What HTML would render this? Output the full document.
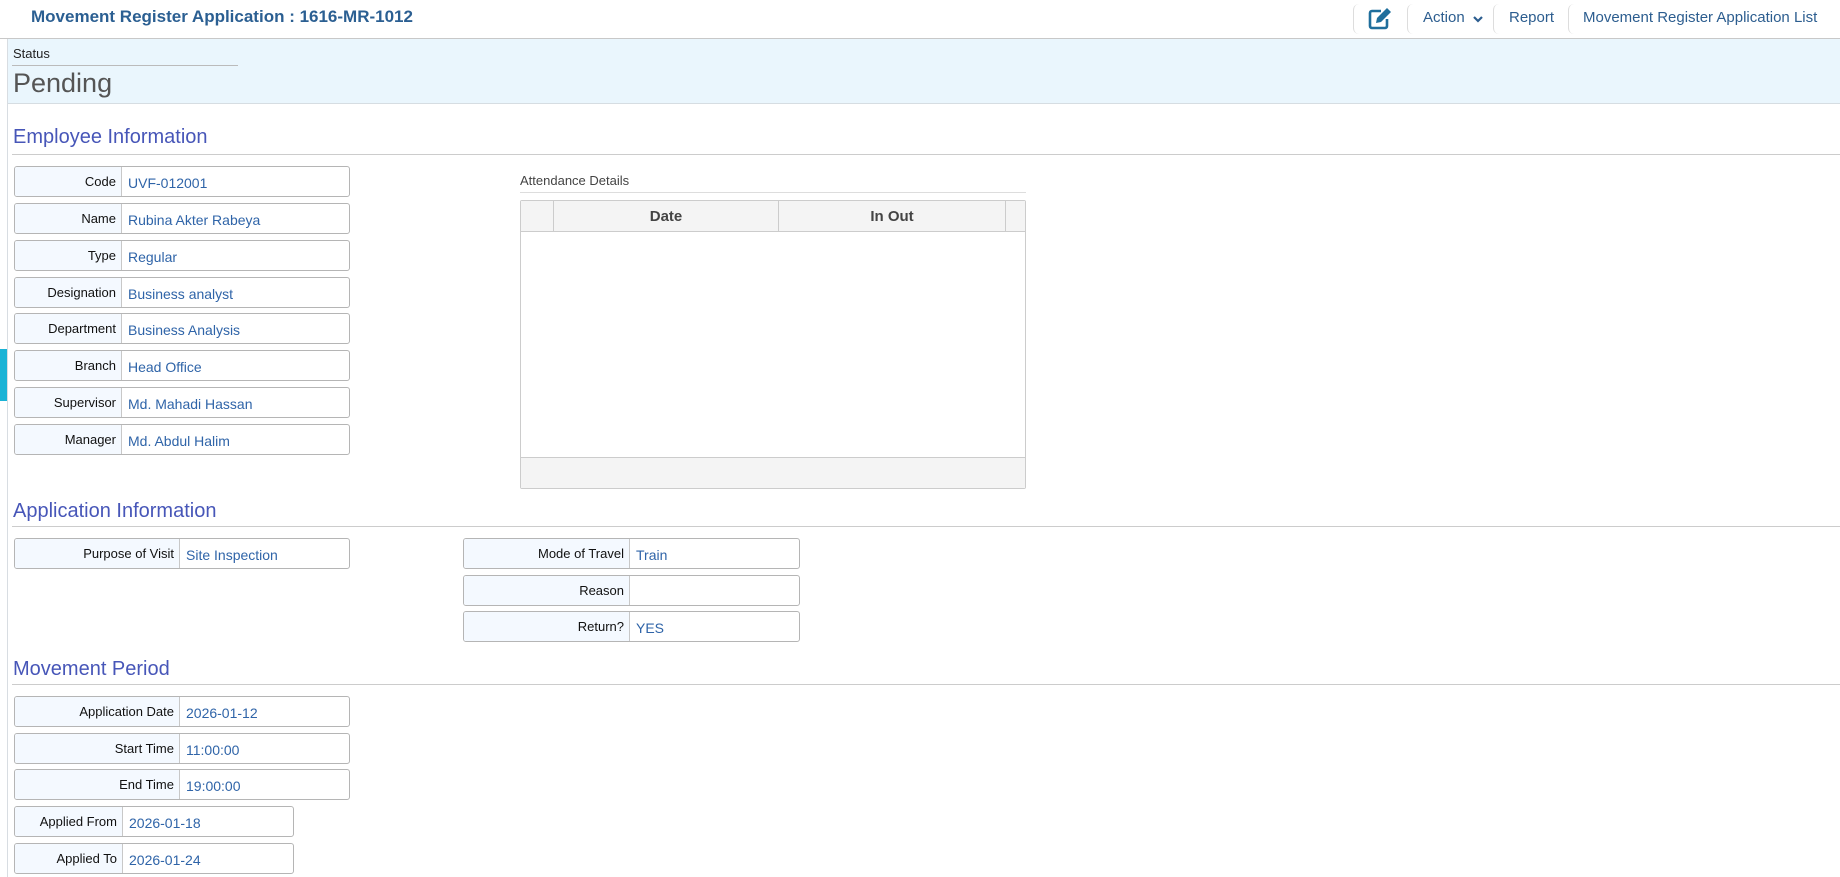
<!DOCTYPE html>
<html><head><meta charset="utf-8"><style>
*{box-sizing:border-box;margin:0;padding:0}
body{width:1840px;height:877px;overflow:hidden;background:#fff;font-family:"Liberation Sans",sans-serif;position:relative}
.a{position:absolute}
.hdr{left:0;top:0;width:1840px;height:39px;border-bottom:1px solid #c8c8c8;background:#fff}
.title{left:31px;top:7px;font-size:17px;font-weight:bold;color:#2b5f92}
.sep{top:4px;width:8px;height:30px;border-left:1px solid #ddd;border-radius:6px 0 0 6px}
.nav{top:9px;font-size:15px;color:#2c5d8f}
.band{left:8px;top:39px;width:1832px;height:65px;background:#eaf6fd;border-bottom:1px solid #d6dde2}
.h2{font-size:20px;color:#4756b8}
.hl{height:1px;background:#ccc;left:12px;right:0}
.row{position:absolute;height:31px;border:1px solid #b5b5b5;border-radius:3px;display:flex;font-size:14px;overflow:hidden}
.row .l{background:#f4f9ff;border-right:1px solid #c8c8c8;text-align:right;padding:7px 5px 0 0;color:#111;font-size:13px}
.row .v{padding:8px 0 0 6px;color:#2f64a8}
</style></head><body>
<div class="a" style="left:0;top:0;width:8px;height:877px;border-right:1px solid #d8dde2;background:#fff"></div>
<div class="a" style="left:0;top:349px;width:7px;height:52px;background:#1ab3d6"></div>
<div class="a hdr"></div>
<div class="a title">Movement Register Application : 1616-MR-1012</div>
<div class="a sep" style="left:1353px"></div>
<svg class="a" style="left:1367px;top:7px" width="26" height="24" viewBox="0 0 26 24"><path d="M14 4H5a2 2 0 0 0-2 2v13a2 2 0 0 0 2 2h13a2 2 0 0 0 2-2v-7" fill="none" stroke="#1f6e9c" stroke-width="2.6"/><path d="M20 1l4 4-10 10-5 1 1-5z" fill="#1f6e9c"/></svg>
<div class="a sep" style="left:1407px"></div>
<div class="a nav" style="left:1423px">Action</div>
<svg class="a" style="left:1473px;top:15px" width="10" height="8" viewBox="0 0 10 8"><path d="M1 2l4 4 4-4" fill="none" stroke="#2c5d8f" stroke-width="2.2"/></svg>
<div class="a sep" style="left:1493px"></div>
<div class="a nav" style="left:1509px">Report</div>
<div class="a sep" style="left:1568px"></div>
<div class="a nav" style="left:1583px">Movement Register Application List</div>
<div class="a band"></div>
<div class="a" style="left:13px;top:46px;font-size:13px;color:#222">Status</div>
<div class="a" style="left:12px;top:65px;width:226px;height:1px;background:#bbb"></div>
<div class="a" style="left:13px;top:68px;font-size:27px;color:#555">Pending</div>

<div class="a h2" style="left:13px;top:126px">Employee Information</div>
<div class="a hl" style="top:154px"></div>
<div class="row" style="left:14px;top:166px;width:336px"><div class="l" style="width:107px">Code</div><div class="v">UVF-012001</div></div>
<div class="row" style="left:14px;top:203px;width:336px"><div class="l" style="width:107px">Name</div><div class="v">Rubina Akter Rabeya</div></div>
<div class="row" style="left:14px;top:240px;width:336px"><div class="l" style="width:107px">Type</div><div class="v">Regular</div></div>
<div class="row" style="left:14px;top:277px;width:336px"><div class="l" style="width:107px">Designation</div><div class="v">Business analyst</div></div>
<div class="row" style="left:14px;top:313px;width:336px"><div class="l" style="width:107px">Department</div><div class="v">Business Analysis</div></div>
<div class="row" style="left:14px;top:350px;width:336px"><div class="l" style="width:107px">Branch</div><div class="v">Head Office</div></div>
<div class="row" style="left:14px;top:387px;width:336px"><div class="l" style="width:107px">Supervisor</div><div class="v">Md. Mahadi Hassan</div></div>
<div class="row" style="left:14px;top:424px;width:336px"><div class="l" style="width:107px">Manager</div><div class="v">Md. Abdul Halim</div></div>

<div class="a" style="left:520px;top:173px;font-size:13px;color:#444">Attendance Details</div>
<div class="a" style="left:520px;top:192px;width:506px;height:1px;background:#ddd"></div>
<div class="a" style="left:520px;top:200px;width:506px;height:289px;border:1px solid #ccc;border-radius:2px;background:#fff">
 <div class="a" style="left:0;top:0;width:504px;height:31px;background:#f4f4f4;border-bottom:1px solid #ccc"></div>
 <div class="a" style="left:32px;top:0;width:1px;height:31px;background:#ccc"></div>
 <div class="a" style="left:257px;top:0;width:1px;height:31px;background:#ccc"></div>
 <div class="a" style="left:484px;top:0;width:1px;height:31px;background:#ccc"></div>
 <div class="a" style="left:33px;top:7px;width:224px;text-align:center;font-size:15px;font-weight:bold;color:#444">Date</div>
 <div class="a" style="left:258px;top:7px;width:226px;text-align:center;font-size:15px;font-weight:bold;color:#444">In Out</div>
 <div class="a" style="left:0;top:256px;width:504px;height:31px;background:#f4f4f4;border-top:1px solid #ccc"></div>
</div>

<div class="a h2" style="left:13px;top:500px">Application Information</div>
<div class="a hl" style="top:526px"></div>
<div class="row" style="left:14px;top:538px;width:336px"><div class="l" style="width:165px">Purpose of Visit</div><div class="v">Site Inspection</div></div>
<div class="row" style="left:463px;top:538px;width:337px"><div class="l" style="width:166px">Mode of Travel</div><div class="v">Train</div></div>
<div class="row" style="left:463px;top:575px;width:337px"><div class="l" style="width:166px">Reason</div><div class="v"></div></div>
<div class="row" style="left:463px;top:611px;width:337px"><div class="l" style="width:166px">Return?</div><div class="v">YES</div></div>

<div class="a h2" style="left:13px;top:658px">Movement Period</div>
<div class="a hl" style="top:684px"></div>
<div class="row" style="left:14px;top:696px;width:336px"><div class="l" style="width:165px">Application Date</div><div class="v">2026-01-12</div></div>
<div class="row" style="left:14px;top:733px;width:336px"><div class="l" style="width:165px">Start Time</div><div class="v">11:00:00</div></div>
<div class="row" style="left:14px;top:769px;width:336px"><div class="l" style="width:165px">End Time</div><div class="v">19:00:00</div></div>
<div class="row" style="left:14px;top:806px;width:280px"><div class="l" style="width:108px">Applied From</div><div class="v">2026-01-18</div></div>
<div class="row" style="left:14px;top:843px;width:280px"><div class="l" style="width:108px">Applied To</div><div class="v">2026-01-24</div></div>
</body></html>
